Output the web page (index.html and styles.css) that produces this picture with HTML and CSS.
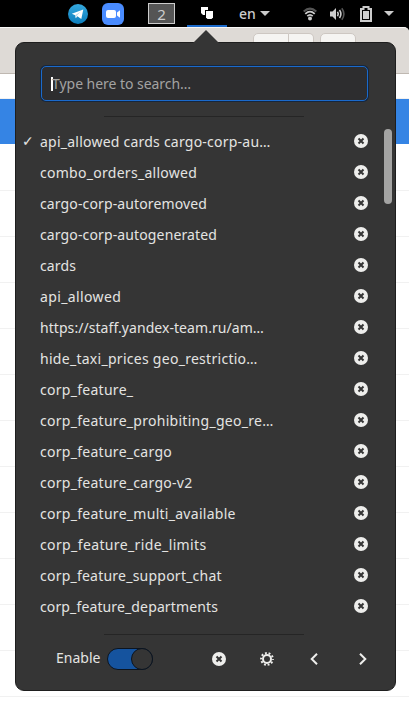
FILE: index.html
```html
<!DOCTYPE html>
<html lang="en">
<head>
<meta charset="utf-8">
<title>Clipboard history</title>
<link rel="stylesheet" href="styles.css">
</head>
<body>
<svg class="defs" width="0" height="0">
  <symbol id="remove" viewBox="0 0 14 14"><circle cx="7" cy="7" r="7" fill="#eeeeec"/><path d="M4.500 4.500l5 5M9.500 4.500l-5 5" stroke="#353535" stroke-width="2"/></symbol>
</svg>
<header class="topbar">
  <svg class="telegram" width="20" height="20" viewBox="0 0 20 20"><defs><linearGradient id="tg" x2="0" y2="1"><stop stop-color="#35a9df"/><stop offset="1" stop-color="#0b7dbc"/></linearGradient></defs><circle cx="10" cy="10" r="10" fill="url(#tg)"/><path d="M3.8 9.8L15.3 5.4 13.3 15 9.4 12.3 7.8 14.3 7.2 11.2z" fill="#fff"/><path d="M7.2 11.2L12.8 7.6 8.6 11.8 7.8 14.3z" fill="#b5d6e8"/></svg>
  <svg class="zoom" width="22" height="22" viewBox="0 0 22 22"><rect width="22" height="22" rx="6" fill="#4a8cff"/><rect x="4" y="7" width="10" height="8" rx="2" fill="#fff"/><path d="M15 9.6L18 7.3v7.4l-3-2.3z" fill="#fff"/></svg>
  <span class="workspace">2</span>
  <span class="clipboard"><svg width="14" height="14" viewBox="0 0 14 14"><path d="M1 1h7v3H5v5H3L1 7z" fill="#fff"/><path d="M6 5h7v6.5L11.5 13H7.5L6 11.5z" fill="#fff"/></svg></span>
  <span class="lang">en</span>
  <svg class="caret" width="10" height="5"><path d="M0 0h10L5 5z" fill="#ccc"/></svg>
  <svg class="wifi" width="14" height="14" viewBox="0 0 14 14" fill="none"><path d="M.7 4.5Q7-1.3 13.3 4.5" stroke="#555" stroke-width="2"/><path d="M2.3 6.8Q7 2.4 11.7 6.8M4.3 9.2Q7 6.6 9.7 9.2" stroke="#ccc" stroke-width="1.8"/><circle cx="7" cy="11.4" r="2" fill="#ccc"/></svg>
  <svg class="volume" width="15" height="14" viewBox="0 0 15 14" fill="none"><path d="M0 4.5h2.5L6 1v12L2.500 9.500H0z" fill="#ccc"/><path d="M7.5 4.800Q9 7 7.500 9.200M9.500 3Q12.300 7 9.500 11" stroke="#ccc" stroke-width="1.6"/><path d="M11.800 1.200Q16 7 11.800 12.800" stroke="#555" stroke-width="1.600"/></svg>
  <svg class="battery" width="12" height="16" viewBox="0 0 12 16"><path d="M1 3h2.500V1h5v2H11v12H1z" fill="none" stroke="#ccc" stroke-width="2"/><path d="M3 5h6v8H3z" fill="#ccc"/></svg>
  <svg class="caret" width="10" height="5"><path d="M0 0h10L5 5z" fill="#ccc"/></svg>
</header>
<main class="window">
  <div class="toolbar"><i class="tool left"></i><i class="tool mid"></i><i class="tool single"></i></div>
  <div class="line first"></div><div class="line selected"></div>
  <div class="line"></div><div class="line"></div><div class="line"></div><div class="line"></div><div class="line"></div><div class="line"></div><div class="line"></div><div class="line"></div><div class="line"></div><div class="line"></div><div class="line"></div><div class="line"></div>
</main>
<section class="popup">
  <svg class="arrow" width="26" height="13" viewBox="0 0 26 13"><path d="M0 13L1 12 13 0 25 12 26 13z" fill="#353535"/></svg>
  <div class="search"><i class="cursor"></i><span>Type here to search…</span></div>
  <hr class="rule">
  <div class="scroll">
    <ul class="list">
      <li class="medium"><b>✓</b><span>api_allowed cards cargo-corp-au…</span><svg><use href="#remove"/></svg></li>
      <li><span>combo_orders_allowed</span><svg><use href="#remove"/></svg></li>
      <li class="snug"><span>cargo-corp-autoremoved</span><svg><use href="#remove"/></svg></li>
      <li class="snug"><span>cargo-corp-autogenerated</span><svg><use href="#remove"/></svg></li>
      <li class="snug"><span>cards</span><svg><use href="#remove"/></svg></li>
      <li class="loose"><span>api_allowed</span><svg><use href="#remove"/></svg></li>
      <li class="tight"><span>https://staff.yandex-team.ru/am…</span><svg><use href="#remove"/></svg></li>
      <li><span>hide_taxi_prices geo_restrictio…</span><svg><use href="#remove"/></svg></li>
      <li><span>corp_feature_</span><svg><use href="#remove"/></svg></li>
      <li><span>corp_feature_prohibiting_geo_re…</span><svg><use href="#remove"/></svg></li>
      <li><span>corp_feature_cargo</span><svg><use href="#remove"/></svg></li>
      <li><span>corp_feature_cargo-v2</span><svg><use href="#remove"/></svg></li>
      <li><span>corp_feature_multi_available</span><svg><use href="#remove"/></svg></li>
      <li class="loose"><span>corp_feature_ride_limits</span><svg><use href="#remove"/></svg></li>
      <li class="medium"><span>corp_feature_support_chat</span><svg><use href="#remove"/></svg></li>
      <li class="snug"><span>corp_feature_departments</span><svg><use href="#remove"/></svg></li>
    </ul>
    <i class="thumb"></i>
  </div>
  <hr class="rule">
  <footer class="actions">
    <span class="label">Enable</span><span class="switch"><i></i></span>
    <svg class="clear"><use href="#remove"/></svg>
    <svg class="gear" width="14" height="14" viewBox="-7 -7 14 14"><circle r="4" fill="none" stroke="#eeeeec" stroke-width="2"/><circle r="5.900" fill="none" stroke="#eeeeec" stroke-width="2" stroke-dasharray="1.850 1.857" stroke-dashoffset=".925"/></svg>
    <svg class="prev" width="8" height="12" viewBox="0 0 8 12"><path d="M7 .7L1.700 6 7 11.300" fill="none" stroke="#eeeeec" stroke-width="2"/></svg>
    <svg class="next" width="8" height="12" viewBox="0 0 8 12"><path d="M1 .7L6.300 6 1 11.300" fill="none" stroke="#eeeeec" stroke-width="2"/></svg>
  </footer>
</section>
</body>
</html>
```
FILE: styles.css
```css
* { box-sizing: border-box; }
body { margin: 0; width: 409px; height: 702px; overflow: hidden; position: relative; background: linear-gradient(#000 60px, #fff 60px); font: 14px/20px "Noto Sans", "Open Sans", sans-serif; color: #e4e4e2; }
svg { display: block; flex: none; }
.defs { position: absolute; }
.topbar { height: 27px; background: #000; display: flex; align-items: center; color: #ccc; }
.telegram { margin-left: 68px; }
.zoom { margin-left: 14px; }
.workspace { width: 27px; height: 21px; margin-left: 24px; border: 1px solid #ccc; background: #555; text-align: center; line-height: 20px; font-size: 15px; }
.clipboard { width: 40px; height: 27px; margin-left: 12px; border-bottom: 2px solid #1b6acb; display: flex; justify-content: center; align-items: center; }
.lang { width: 17px; margin-left: 12px; font-size: 14px; font-weight: 500; }
.caret { margin-left: 4px; }
.wifi { margin-left: 33px; }
.volume { margin-left: 13px; }
.battery { margin-left: 15px; }
.battery + .caret { margin-left: 12px; }
.window { height: 675px; overflow: hidden; border-top: 1px solid #f8f7f6; background: #fff; border-radius: 0 5px 0 0; }
.toolbar { height: 46px; padding: 5px 0 0 253px; display: flex; background: #dedad6; border-bottom: 1px solid #bfb8b1; }
.tool { height: 30px; border: 1px solid #cdc7c2; background: #f5f4f2; }
.left { width: 36px; border-radius: 5px 0 0 5px; }
.mid { width: 25px; border-left: 0; border-radius: 0 5px 5px 0; }
.single { width: 36px; margin-left: 6px; border-radius: 5px; }
.line { height: 46px; border-bottom: 1px solid #f1f1f1; }
.line.first { height: 25px; }
.line.selected { height: 45px; background: #3584e4; border: 0; }
.line.selected + .line { height: 47px; }
.popup { position: absolute; left: 15px; top: 42px; width: 381px; height: 649px; border: 1px solid #1e1e1e; border-radius: 9px; background: #353535; padding: 23px 0 0; }
.arrow { position: absolute; left: 177px; top: -13px; }
.search { width: 327px; height: 35px; margin-left: 25px; border: 1px solid #1b6acb; border-radius: 5px; background: #2d2d2f; box-shadow: 0 0 0 1px #15263d; display: flex; align-items: center; padding-left: 9px; color: #a3a3a2; }
.search span { margin-left: -1px; letter-spacing: -.04px; }
.cursor { width: 2px; height: 14px; background: #fff; }
.rule { width: 200px; height: 1px; border: 0; margin: 15px 0 0 88px; background: #252525; }
.scroll { display: flex; margin-top: 10px; height: 496px; }
.list { width: 353px; margin: -1px 0 0; padding: 0; list-style: none; letter-spacing: .28px; }
.list li { height: 31px; padding-left: 24px; display: flex; align-items: center; white-space: nowrap; position: relative; }
.list .tight { letter-spacing: .06px; }
.list .snug { letter-spacing: .13px; }
.list .medium { letter-spacing: .23px; }
.list .loose { letter-spacing: .38px; }
.list b { position: absolute; left: 6px; top: 5px; font: 14px/20px "DejaVu Sans", sans-serif; }
.list svg { width: 14px; height: 14px; margin: 0 1px 2px auto; }
.thumb { width: 8px; height: 75px; margin: 2px 0 0 15px; border-radius: 4px; background: #a4a4a3; }
.scroll + .rule { margin-top: 11px; }
.actions { display: flex; align-items: center; height: 48px; padding-left: 40px; }
.label { width: 46px; padding-bottom: 2px; }
.switch { width: 46px; height: 22px; margin-left: 5px; border: 1px solid #0b1420; border-radius: 11px; background: #15539e; display: flex; justify-content: flex-end; }
.switch i { width: 22px; height: 22px; margin: -1px; border: 1px solid #0b1420; border-radius: 50%; background: #353535; }
.clear { width: 14px; height: 14px; margin-left: 59px; }
.gear { margin-left: 34px; }
.prev { margin-left: 36px; }
.next { margin-left: 41px; }
```
